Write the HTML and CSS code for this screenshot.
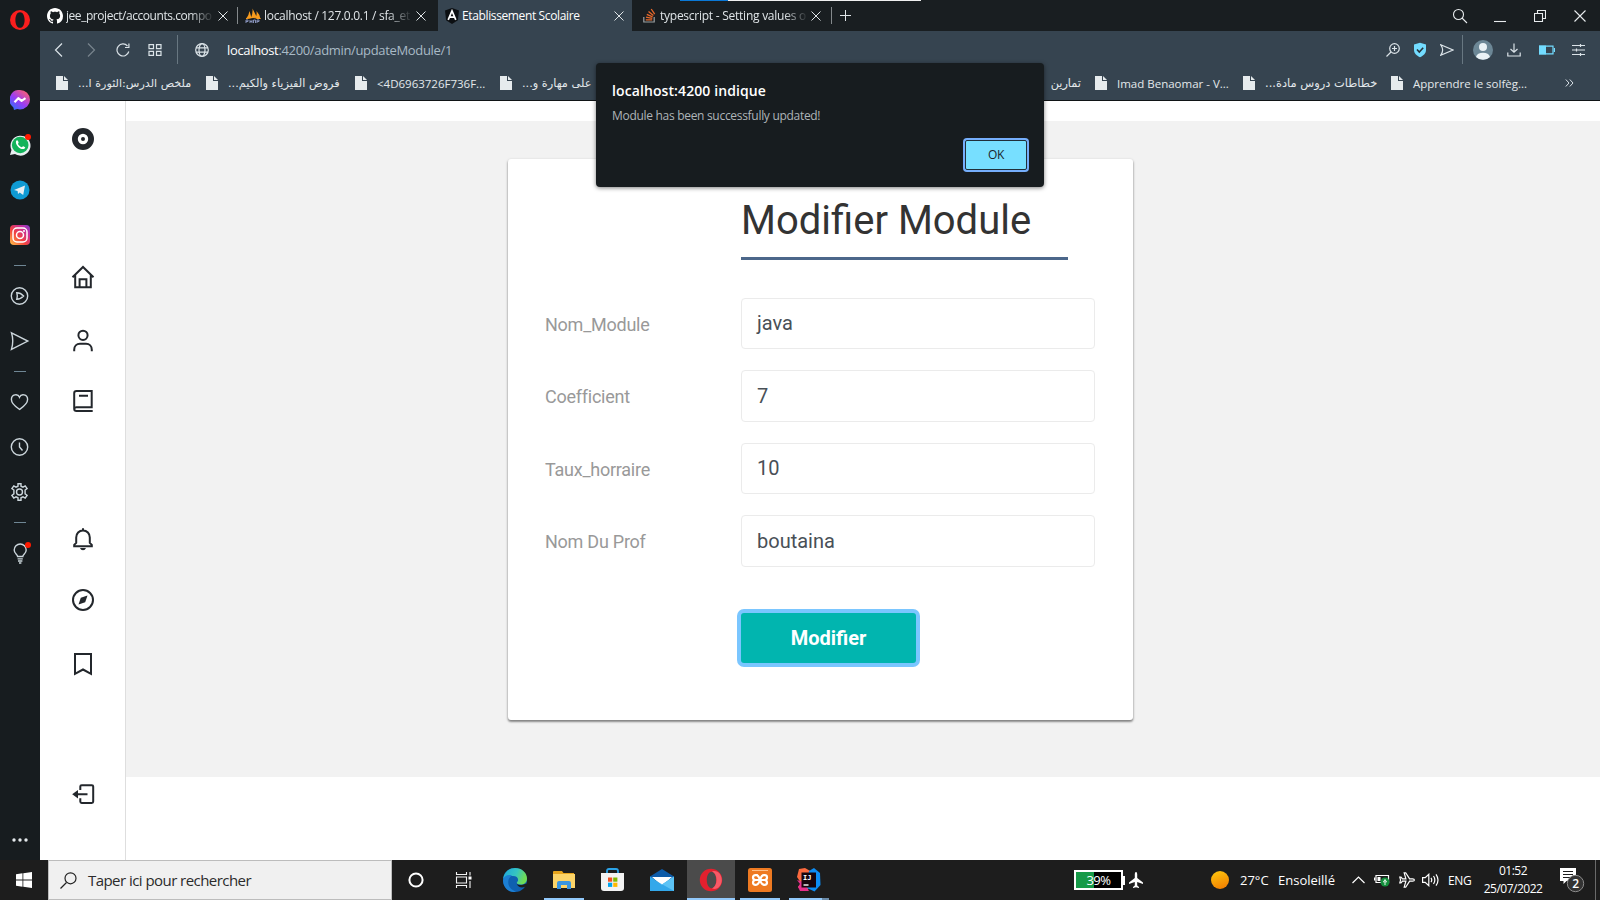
FILE: index.html
```html
<!DOCTYPE html>
<html lang="fr">
<head>
<meta charset="utf-8">
<title>Etablissement Scolaire</title>
<link rel="stylesheet" href="styles.css">
</head>
<body>
<div class="screen">
  <div class="browser">
    <aside class="opera-bar">
      <div class="slot logo"><svg width="20" height="20" viewBox="0 0 20 20"><path fill="#fa1e1e" fill-rule="evenodd" d="M10 0a10 10 0 1 0 0 20a10 10 0 1 0 0-20zM10 2.2c3 0 4.6 3.5 4.6 7.8s-1.6 7.8-4.6 7.8S5.400 14.300 5.400 10 7 2.200 10 2.200z"/></svg></div>
      <div class="slot"><svg width="20" height="20" viewBox="0 0 20 20"><defs><linearGradient id="ms" x1="0" y1="1" x2=".8" y2="0"><stop offset="0" stop-color="#1a7cff"/><stop offset=".5" stop-color="#9a3cf5"/><stop offset="1" stop-color="#ff6070"/></linearGradient></defs><path fill="url(#ms)" d="M10 0a10 9.700 0 0 1 0 19.400q-1.500 0-2.800-.4L4 20l-.6-2.600A9.700 9.700 0 0 1 10 0z"/><path d="M4.500 12.200l3.800-4 3.300 2.600 3.900-2.600" fill="none" stroke="#fff" stroke-width="2.200" stroke-linejoin="round"/></svg></div>
      <div class="slot"><svg width="22" height="22" viewBox="0 0 22 22"><path fill="#e8eef0" d="M1 21l1.500-5A10 10 0 1 1 6 20z"/><circle cx="11.200" cy="11" r="8.300" fill="#12b35a"/><path d="M7 7.200c1-1.700 2-.6 2.600 1.300.2.700-.9 1-.5 1.700 1 1.600 2 2.400 3.500 3 .7.200 1-1.200 1.700-.9 2.500 1 2.200 1.500 1.300 2.300-3 2.200-9.600-3-8.600-7.400z" fill="#fff"/><circle cx="19" cy="3" r="3" fill="#ff1a00"/></svg></div>
      <div class="slot"><svg width="20" height="20" viewBox="0 0 20 20"><circle cx="10" cy="10" r="9.500" fill="#0f9ad3"/><path d="M4 10l11-4.600-1.800 9.600-3.500-2.500-1.700 1.600-.4-3z" fill="#e6eef2"/></svg></div>
      <div class="slot"><svg width="20" height="20" viewBox="0 0 20 20"><defs><linearGradient id="ig" x1="0" y1="1" x2="1" y2="0"><stop offset="0" stop-color="#ffc54a"/><stop offset=".4" stop-color="#f4443c"/><stop offset=".75" stop-color="#c72f9c"/><stop offset="1" stop-color="#7a3fd0"/></linearGradient></defs><rect width="20" height="20" rx="4" fill="url(#ig)"/><g fill="none" stroke="#fff" stroke-width="1.500"><rect x="3" y="3" width="14" height="14" rx="4"/><circle cx="10" cy="10" r="3.500"/></g><circle cx="14" cy="6" r="1" fill="#fff"/></svg></div>
      <div class="dash"></div>
      <div class="slot"><svg class="line" width="20" height="20" viewBox="0 0 20 20"><circle cx="9.500" cy="10" r="8.200"/><path d="M6.800 6.800q3.800 0 6.800 3.200-3 3.200-6.800 3.200 1-3.200 0-6.400z"/></svg></div>
      <div class="slot"><svg class="line" width="20" height="20" viewBox="0 0 20 20"><path d="M1.500 1.800L17.800 10 1.500 18.300q2.500-8.300 0-16.500z"/></svg></div>
      <div class="dash"></div>
      <div class="slot"><svg class="line" width="20" height="20" viewBox="0 0 20 20"><path d="M9.500 5.200C8 1.500 1.400 2 1.400 7.500c0 4.500 5 7.800 8.100 9.900 3-2.100 8.100-5.400 8.100-9.900C17.600 2 11 1.500 9.500 5.200z"/></svg></div>
      <div class="slot"><svg class="line" width="20" height="20" viewBox="0 0 20 20"><circle cx="9.500" cy="10" r="8.200"/><path d="M9.500 5.500V10l3 3.500"/></svg></div>
      <div class="slot"><svg class="line" width="20" height="20" viewBox="0 0 20 20"><path d="M8 1.800h3v2.400l2 1 2.200-1.300 1.900 2.700-2 1.400v3.900l2 1.400-1.900 2.700-2.200-1.200-2 1v2.400H8v-2.400l-2-1L3.800 16 1.900 13.300l2-1.400V8l-2-1.400 1.900-2.700L6 5.200l2-1z"/><circle cx="9.500" cy="10" r="3"/></svg></div>
      <div class="dash"></div>
      <div class="slot"><svg width="24" height="24" viewBox="0 0 24 24"><g fill="none" stroke="#ccd6dc" stroke-width="1.400"><path d="M9.600 15.500c0-2-3.400-2.800-3.400-6.500a6 6 0 0 1 12 0c0 3.700-3.400 4.500-3.400 6.500zM9.600 17.900h5.200M10 20h4.400M11 22h2.400"/></g><circle cx="20" cy="4" r="3" fill="#ff1a00"/></svg></div>
      <div class="slot last"><svg width="16" height="4" viewBox="0 0 16 4" fill="#e4e9ec"><circle cx="2" cy="2" r="1.700"/><circle cx="8" cy="2" r="1.700"/><circle cx="14" cy="2" r="1.700"/></svg></div>
    </aside>
    <div class="window">
      <div class="tabs">
        <div class="tab t1"><svg width="16" height="16" viewBox="0 0 16 16"><path fill="#fff" d="M8 0C3.580 0 0 3.580 0 8c0 3.540 2.290 6.530 5.470 7.590.4.070.55-.17.55-.38 0-.19-.01-.82-.01-1.490-2.010.37-2.530-.49-2.690-.94-.09-.23-.48-.94-.82-1.130-.28-.15-.68-.52-.01-.53.63-.01 1.080.58 1.230.82.72 1.210 1.870.87 2.330.66.07-.52.28-.87.51-1.070-1.780-.2-3.640-.89-3.640-3.950 0-.87.31-1.590.82-2.150-.08-.2-.36-1.020.08-2.120 0 0 .67-.21 2.200.82.64-.18 1.320-.27 2-.27s1.360.09 2 .27c1.530-1.040 2.200-.82 2.200-.82.44 1.100.16 1.920.08 2.120.51.56.82 1.270.82 2.150 0 3.070-1.870 3.750-3.650 3.950.29.25.54.73.54 1.480 0 1.070-.01 1.930-.01 2.200 0 .21.15.46.55.38A8.010 8.010 0 0 0 16 8c0-4.420-3.580-8-8-8z"/></svg><span class="tab-text fade">jee_project/accounts.compo</span><svg class="x" width="10" height="10" viewBox="0 0 10 10"><path d="M.5.500l9 9M9.500.500l-9 9"/></svg></div>
        <div class="sep"></div>
        <div class="tab t2"><svg width="16" height="16" viewBox="0 0 16 16"><path fill="#f89c1e" d="M1 11Q4 7 4.500 3l2 7zM6 10Q8 5 7.500.500L12 9.500zM11 9q1-3 .5-6 3 3 4 8h-4z"/><path d="M1 10.500q7-2 14.500 0" stroke="#f89c1e" fill="none"/><path d="M1 15v-3h2v1.500H1M5 15v-3m0 1.500h2M7 12v3m1.500 0v-3h2v3m1.500 0v-3h2v1.500h-2" stroke="#8590b8" fill="none"/></svg><span class="tab-text fade">localhost / 127.0.0.1 / sfa_et</span><svg class="x" width="10" height="10" viewBox="0 0 10 10"><path d="M.5.500l9 9M9.500.500l-9 9"/></svg></div>
        <div class="tab t3 active"><svg width="14" height="16" viewBox="0 0 14 16"><path fill="#0c0f12" d="M7 0l7 2.600-1.100 9.600L7 16l-5.900-3.800L0 2.600z"/><path d="M3.200 11.800L7 3l3.800 8.800M4.500 9.200h5" fill="none" stroke="#fff" stroke-width="1.700"/></svg><span class="tab-text">Etablissement Scolaire</span><svg class="x" width="10" height="10" viewBox="0 0 10 10"><path d="M.5.500l9 9M9.500.500l-9 9"/></svg></div>
        <div class="tab t4"><svg width="13" height="15" viewBox="0 0 13 15"><path d="M.8 9v5h10.400V9" fill="none" stroke="#9a9fa2" stroke-width="1.200"/><path d="M2.800 11.900h6.400M3 9.200l6.300 1.200M3.800 6.300l5.800 2.600M5.500 3.500l4.900 4M8.200 1l3.500 5.200" stroke="#e8682a" stroke-width="1.300" fill="none"/></svg><span class="tab-text fade">typescript - Setting values o</span><svg class="x" width="10" height="10" viewBox="0 0 10 10"><path d="M.5.500l9 9M9.500.500l-9 9"/></svg></div>
        <div class="sep"></div>
        <svg class="plus" width="11" height="11" viewBox="0 0 11 11"><path d="M5.500 0v11M0 5.500h11"/></svg>
        <div class="win-tools">
          <svg width="16" height="16" viewBox="0 0 16 16"><circle cx="6.500" cy="6.500" r="5"/><path d="M10 10l5 5"/></svg>
          <svg width="12" height="16" viewBox="0 0 12 16"><path d="M0 13.500h12"/></svg>
          <svg width="12" height="12" viewBox="0 0 12 12"><path d="M.5 3.500h8v8h-8zM3.500 3.500v-3h8v8h-3"/></svg>
          <svg width="12" height="12" viewBox="0 0 12 12"><path d="M.5.500l11 11M11.500.500l-11 11"/></svg>
        </div>
        <div class="strip"><i></i></div>
      </div>
      <div class="toolbar">
        <div class="nav">
          <svg width="14" height="14" viewBox="0 0 14 14"><path d="M10 .5L3.500 7l6.500 6.500"/></svg>
          <svg class="dim" width="14" height="14" viewBox="0 0 14 14"><path d="M4 .5L10.500 7 4 13.500"/></svg>
          <svg width="14" height="14" viewBox="0 0 14 14"><path d="M12.800 8.500A6 6 0 1 1 11.500 3M12.900.500v4H9"/></svg>
          <svg width="14" height="12" viewBox="0 0 14 12"><path d="M1 .6h4.500v4H1zM8.500.600H13v4H8.500zM1 7.400h4.500v4H1zM8.500 7.400H13v4H8.500z"/></svg>
        </div>
        <div class="vsep"></div>
        <svg class="globe" width="14" height="14" viewBox="0 0 14 14"><circle cx="7" cy="7" r="6.300"/><ellipse cx="7" cy="7" rx="3" ry="6.300"/><path d="M1 4.800h12M1 9.200h12"/></svg>
        <div class="url"><b>localhost</b>:4200/admin/updateModule/1</div>
        <div class="tb-right">
          <svg width="14" height="14" viewBox="0 0 14 14"><circle cx="8.500" cy="5.500" r="4.800"/><path d="M5 9l-4.500 4.500M8.500 3v5M6 5.500h5"/></svg>
          <svg class="shield" width="14" height="16" viewBox="0 0 14 16"><path fill="#73dcff" stroke="none" d="M7 .8l6 1.700v5.500c0 3.500-3 6-6 7.200C4 14 1 11.500 1 8V2.500z"/><path stroke="#26323a" stroke-width="1.600" d="M4 7.500L6.300 10l3.900-4.200"/></svg>
          <svg width="14" height="12" viewBox="0 0 14 12"><path d="M.8.800L13 6 .8 11.200Q4.500 6 .8.800z"/></svg>
          <div class="vsep"></div>
          <svg class="avatar" width="20" height="20" viewBox="0 0 20 20"><circle cx="10" cy="10" r="10" fill="#6c8796"/><circle cx="10" cy="7" r="4" fill="#eaf2f6"/><path fill="#eaf2f6" d="M3 17a7.200 5.500 0 0 1 14 0 10 10 0 0 1-14 0z"/></svg>
          <svg class="dl" width="14" height="14" viewBox="0 0 14 14"><path d="M7 .500v8.500M3.500 6L7 9.300 10.500 6M.8 9.500v3.500h12.400V9.500"/></svg>
          <svg class="saver" width="16" height="10" viewBox="0 0 16 10"><path fill="#73dcff" stroke="none" d="M0 .6h7v8.800H0z"/><path stroke="#73dcff" d="M.5 1.200h13.500v7.600H.5zM15.500 3v4"/></svg>
          <svg class="menu" width="13" height="12" viewBox="0 0 13 12"><path d="M0 1.500h13M0 6h13M0 10.500h13M8.500 0v3M4.500 4.500v3M8.500 9v3"/></svg>
        </div>
      </div>
      <div class="bookmarks">
        <div class="bm b1"><svg width="12" height="14" viewBox="0 0 12 14"><path d="M0 0h7v5h5v9H0zM8 0l4 4H8z"/></svg><span class="ar">ملخص الدرس:الثورة ا...</span></div>
        <div class="bm b2"><svg width="12" height="14" viewBox="0 0 12 14"><path d="M0 0h7v5h5v9H0zM8 0l4 4H8z"/></svg><span class="ar">فروض الفيزياء والكيم...</span></div>
        <div class="bm b3"><svg width="12" height="14" viewBox="0 0 12 14"><path d="M0 0h7v5h5v9H0zM8 0l4 4H8z"/></svg><span>&lt;4D6963726F736F...</span></div>
        <div class="bm b4"><svg width="12" height="14" viewBox="0 0 12 14"><path d="M0 0h7v5h5v9H0zM8 0l4 4H8z"/></svg><span class="ar">على مهارة و...</span></div>
        <div class="bm b5"><span class="ar">تمارين</span></div>
        <div class="bm b6"><svg width="12" height="14" viewBox="0 0 12 14"><path d="M0 0h7v5h5v9H0zM8 0l4 4H8z"/></svg><span>Imad Benaomar - V...</span></div>
        <div class="bm b7"><svg width="12" height="14" viewBox="0 0 12 14"><path d="M0 0h7v5h5v9H0zM8 0l4 4H8z"/></svg><span class="ar">خطاطات دروس مادة...</span></div>
        <div class="bm b8"><svg width="12" height="14" viewBox="0 0 12 14"><path d="M0 0h7v5h5v9H0zM8 0l4 4H8z"/></svg><span>Apprendre le solfèg...</span></div>
        <svg class="more" width="9" height="8" viewBox="0 0 9 8"><path d="M.8.500L4 4 .8 7.500M4.800.500L8 4 4.800 7.500"/></svg>
      </div>
      <div class="page">
        <nav class="side">
          <svg class="i1" width="24" height="24" viewBox="0 0 24 24"><path fill="#23272c" stroke="none" fill-rule="evenodd" d="M12 1a11 11 0 1 0 0 22 11 11 0 0 0 0-22zm0 5.800a5.200 5.200 0 1 1 0 10.400 5.200 5.200 0 0 1 0-10.400zm0 3.200a2 2 0 1 0 0 4 2 2 0 0 0 0-4z"/></svg>
          <svg class="i2" width="24" height="24" viewBox="0 0 24 24"><path d="M1.500 12.200L12 2l10.500 10.200M4.200 10v12.200h15.600V10M8.600 22v-7.800h6.800V22"/></svg>
          <svg class="i3" width="24" height="24" viewBox="0 0 24 24"><circle cx="12" cy="6.300" r="4.600"/><path d="M3.200 22.300v-1.600c0-3.500 2.400-6 5.800-6h6c3.400 0 5.800 2.500 5.800 6v1.600"/></svg>
          <svg class="i4" width="24" height="24" viewBox="0 0 24 24"><path d="M21.700 22H5.500a2.300 2.300 0 0 1-2.300-2.300V4.200A2.300 2.300 0 0 1 5.500 1.900h15.200v16.300H5.500A2.200 2.200 0 0 0 3.200 20M8 6.800h9"/></svg>
          <svg class="i5" width="24" height="24" viewBox="0 0 24 24"><path d="M3.200 19.200v-1.300l2-2V10.500c0-4 2.800-7 6.800-7s6.800 3 6.800 7v5.400l2 2v1.300zM12 1.200v2"/><path fill="#23272c" stroke="none" d="M9 21h6q-.8 2.300-3 2.300T9 21z"/></svg>
          <svg class="i6" width="24" height="24" viewBox="0 0 24 24"><circle cx="12" cy="12" r="10"/><path fill="#23272c" stroke="none" d="M16.500 7.500l-2.300 6.700-6.700 2.300 2.300-6.700z"/></svg>
          <svg class="i7" width="24" height="24" viewBox="0 0 24 24"><path d="M4 2h16v19.800l-8-4.300-8 4.300z"/></svg>
          <svg class="i8" width="24" height="24" viewBox="0 0 24 24"><path d="M9.300 8V4.600Q9.300 3.200 10.700 3.200H20.800Q22.200 3.200 22.200 4.600V19.600Q22.200 21 20.800 21H10.700Q9.300 21 9.300 19.600V16.200M4 12.200h12.500"/><path fill="#23272c" stroke="none" d="M1.200 12.200L7 8v8.400z"/></svg>
        </nav>
        <main class="main">
          <form class="card">
            <h1>Modifier Module</h1>
            <div class="row"><label>Nom_Module</label><div class="field up">java</div></div>
            <div class="row tall"><label>Coefficient</label><div class="field">7</div></div>
            <div class="row"><label>Taux_horraire</label><div class="field up">10</div></div>
            <div class="row tall"><label>Nom Du Prof</label><div class="field">boutaina</div></div>
            <div class="btn">Modifier</div>
          </form>
        </main>
      </div>
    </div>
    <div class="dialog">
      <div class="d-title">localhost:4200 indique</div>
      <div class="d-msg">Module has been successfully updated!</div>
      <div class="d-ok">OK</div>
    </div>
  </div>
  <footer class="taskbar">
    <div class="start"><svg width="16" height="16" viewBox="0 0 16 16" fill="#fff"><path d="M0 2.200l6.500-.9v6.300H0zM7.300 1.200L16 0v7.600H7.300zM0 8.400h6.500v6.300L0 13.800zM7.300 8.400H16V16l-8.700-1.200z"/></svg></div>
    <div class="search"><svg width="17" height="17" viewBox="0 0 17 17"><circle cx="10.500" cy="6.300" r="5.500"/><path d="M6.500 10.500L.5 16.500"/></svg><span>Taper ici pour rechercher</span></div>
    <div class="app w48"><svg width="16" height="16" viewBox="0 0 16 16"><circle cx="8" cy="8" r="6.600" fill="none" stroke="#fff" stroke-width="2"/></svg></div>
    <div class="app w48"><svg width="18" height="16" viewBox="0 0 18 16" fill="none" stroke="#f4f4f4" stroke-width="1.100"><path d="M1.500 0v2.500h10V0M1.500 5h10v6h-10zM1.500 16v-2.500h10V16M15 0v3.500M15 9v7"/><path fill="#fff" stroke="none" d="M13.500 4.500h3v3h-3z"/></svg></div>
    <div class="app edge"><svg width="24" height="24" viewBox="0 0 24 24"><defs><linearGradient id="eg" x1="0" y1="0" x2="1" y2=".3"><stop offset="0" stop-color="#1ba6e0"/><stop offset=".6" stop-color="#36c6c0"/><stop offset="1" stop-color="#6fdc55"/></linearGradient></defs><circle cx="12" cy="12" r="12" fill="#0f60b0"/><path fill="url(#eg)" d="M0 11C1 4 6 0 12 0c7 0 12 5 12 10.500 0 4-3 6-6 6-3.500 0-5-1.200-3.800-2.500 2-2.500.500-6-4.200-6-5 0-9 1-10 3z"/><path fill="#1c7fd3" d="M0 12c1-4 5-6 9-4.500-4 2-5 8-2 12 1.500 2 4 3.500 6 4.400C5 25 0 19 0 12z"/><path fill="#1d1d1d" d="M13.500 15.500c1.500 2 5 2 9.200.200l1.300 0v2l-2 1c-3 1.500-7 .8-8.500-3.200z"/></svg></div>
    <div class="app w40 run"><svg width="22" height="20" viewBox="0 0 22 20"><path fill="#e8a51c" d="M0 2q0-1 1-1h8l1.500 2H21v5H0z"/><path fill="#fcd468" d="M0 4h22v14H0z"/><path fill="#3995e0" d="M4 19v-6q0-2 2-2h10q2 0 2 2v6h-4v-4H8v4z"/></svg></div>
    <div class="app w48 store"><svg width="24" height="24" viewBox="0 0 24 24"><path d="M6 6V3q0-2 2-2h7q2 0 2 2v3" fill="none" stroke="#2ba3e8" stroke-width="1.800"/><path fill="#f3f3f3" d="M0 5h23v15q0 3-3 3H3q-3 0-3-3z"/><path fill="#f25022" d="M7 9.500h4.200v4.200H7z"/><path fill="#7fba00" d="M12.200 9.500h4.200v4.200h-4.200z"/><path fill="#00a4ef" d="M7 14.700h4.200v4.200H7z"/><path fill="#ffb900" d="M12.200 14.700h4.200v4.200h-4.200z"/></svg></div>
    <div class="app mail"><svg width="24" height="24" viewBox="0 0 24 24"><path fill="#0d5ba8" d="M0 8.500L12 1l12 7.500V12H0z"/><path fill="#fff" d="M2 9h20L12 18z"/><path fill="#33a8ea" d="M0 8.500l12 8 12-8V23H0z"/><path fill="#5cc3f5" d="M24 8.500V23L9 14.500l3 2z"/></svg></div>
    <div class="app w48 run on"><svg width="24" height="24" viewBox="0 0 24 24"><path fill="#e3202e" fill-rule="evenodd" d="M12 .8a11.200 11.200 0 1 0 0 22.400 11.200 11.200 0 1 0 0-22.400zM12.500 3.800c2.800 0 4.700 3.700 4.700 8.200s-1.900 8.200-4.700 8.200S7.800 16.500 7.800 12s1.900-8.200 4.700-8.200z"/><path fill="#ff7480" opacity=".7" d="M13 3.600c5-2 9.800 2.400 9.800 8.400s-4.800 10.400-9.800 8.400c6-2 6-14.800 0-16.800z"/></svg></div>
    <div class="app w40 run x1"><svg width="24" height="24" viewBox="0 0 24 24"><rect width="24" height="24" rx="2.500" fill="#ee7a22"/><path d="M4 2.500h16" stroke="#ffc08a"/><path d="M9.800 7.200H7.500Q5 7.200 5 9.500t2.500 2.500h9q2.500 0 2.500-2.500t-2.500-2.300h-.8c-2 0-2.700 2-3.700 4.800s-2 4.800-4 4.800h-.5Q5 16.800 5 14.500t2.500-2.500M8.300 7.200c2 0 2.700 2 3.700 4.800s2 4.800 4 4.800h.5q2.500 0 2.500-2.300t-2.500-2.500" fill="none" stroke="#fff" stroke-width="2.200"/></svg></div>
    <div class="app w40 run x2"><svg width="24" height="24" viewBox="0 0 24 24"><path fill="#fc6a3e" d="M2 1l6-1 7 4-4 18H4l-3-3 3-4-4-6z"/><path fill="#e52f8c" d="M0 12l6 2 6 9H3l-2-4 2-3z"/><path fill="#0d8df5" d="M12 3l5-3 6 5 .5 12-6 6.500L10 20z"/><path fill="#16060e" d="M4.500 4.500h14.500v15H4.500z"/><path d="M6.500 17h5" stroke="#fff" stroke-width="1.400"/><text x="6" y="12.300" class="ij">IJ</text></svg></div>
    <div class="tray">
      <div class="battery"><span>39%</span></div>
      <div class="tip"></div>
      <svg class="plane" width="14" height="16" viewBox="0 0 14 16"><path fill="#fff" d="M7 0q1.200 0 1.200 2v4L14 10.500V12l-5.800-2v3.500L10 15v1l-3-.8L4 16v-1l1.800-1.500V10L0 12v-1.500L5.800 6V2Q5.800 0 7 0z"/></svg>
      <div class="sun"></div>
      <div class="temp">27°C</div>
      <div class="weather">Ensoleillé</div>
      <svg class="chev" width="13" height="8" viewBox="0 0 13 8"><path d="M.5 7L6.500 1l6 6"/></svg>
      <svg class="bat2" width="17" height="14" viewBox="0 0 17 14"><path d="M2 2.500h12.500v7H2zM.500 4.500v3"/><path fill="#fff" stroke="none" d="M3.500 4h3v4h-3z"/><circle cx="11" cy="9" r="4.500" fill="#14903c" stroke="none"/><path d="M11 12V9.500M9.500 9L11 6.500 12.500 9z" stroke-width=".9"/></svg>
      <svg class="plane2" width="16" height="16" viewBox="0 0 16 16"><path d="M15.400 8q0-1.100-1.800-1.100h-3L6.700.8H5.200l1.700 6.100H3.500L2 5.200H.8L1.600 8l-.8 2.800H2l1.500-1.700h3.400l-1.700 6.100h1.500l3.900-6.100h3q1.800 0 1.800-1.100z"/></svg>
      <svg class="vol" width="18" height="14" viewBox="0 0 18 14"><path d="M.6 4.700h2.600L6.800 1.300v11.400L3.200 9.300H.6zM9 4.800q1.500 2.200 0 4.400M11.500 3q2.700 4 0 8M14 1.300q4 5.700 0 11.400"/></svg>
      <div class="lang">ENG</div>
      <div class="clock"><span class="time">01:52</span><span>25/07/2022</span></div>
      <svg class="notif" width="25" height="25" viewBox="0 0 25 25"><path fill="#fff" d="M0 0h16v13H6.500L3.500 16v-3H0z"/><path d="M3 3.500h10M3 6.500h10M3 9.500h7" stroke="#1d1d1d" fill="none"/><circle cx="15.500" cy="15.500" r="8.200" fill="#333" stroke="#8b8b8b"/><text x="12.200" y="20" class="n2">2</text></svg>
      <div class="peek"></div>
    </div>
  </footer>
</div>
</body>
</html>
```
FILE: styles.css
```css
* { box-sizing: border-box; }
body { margin: 0; font-family: "Open Sans", "Noto Sans", "DejaVu Sans", sans-serif; }
svg { display: block; flex: none; }
.screen { width: 1600px; height: 900px; overflow: hidden; display: flex; flex-direction: column; background: #fff; }
.browser { position: relative; height: 860px; display: flex; }

/* Browser side panel */
.opera-bar { width: 40px; background: #171c1f; display: flex; flex-direction: column; align-items: center; }
.slot { height: 45px; display: flex; align-items: center; justify-content: center; flex: none; }
.slot.logo { height: 40px; margin-bottom: 37px; }
.slot.last { height: 40px; margin-top: auto; }
.dash { height: 16px; width: 12px; background: linear-gradient(#6f8694, #6f8694) center / 12px 1px no-repeat; }
.line { fill: none; stroke: #ccd6dc; stroke-width: 1.4; }

/* Tab strip */
.window { width: 1560px; display: flex; flex-direction: column; }
.tabs { position: relative; height: 31px; background: #191e21; display: flex; align-items: center; color: #dfe4e7; font-size: 12px; }
.tab { height: 31px; display: flex; align-items: center; }
.t1 { width: 197px; padding-left: 7px; }
.t2 { width: 200px; padding-left: 7px; }
.t3 { width: 194px; padding-left: 7px; background: #364450; color: #fff; }
.t4 { width: 199px; padding-left: 11px; }
.tab-text { width: 146px; margin: 0 5px 0 3px; white-space: nowrap; overflow: hidden; letter-spacing: -.37px; }
.t1 .tab-text { letter-spacing: -.45px; margin-right: 6px; }
.t2 .tab-text { margin-right: 6px; letter-spacing: -.3px; }
.t3 .tab-text { width: 145px; margin-right: 7px; }
.t4 .tab-text { margin-left: 4px; letter-spacing: -.25px; }
.fade { -webkit-mask-image: linear-gradient(90deg, #000 124px, rgba(0,0,0,.1) 146px); mask-image: linear-gradient(90deg, #000 124px, rgba(0,0,0,.1) 146px); }
.x, .plus { fill: none; stroke: #dfe4e7; stroke-width: 1; }
.sep { width: 1px; height: 17px; background: #84898c; }
.plus { margin-left: 8px; }
.win-tools { margin-left: auto; display: flex; align-items: center; gap: 28px; padding-right: 14px; }
.win-tools svg { fill: none; stroke: #e8ecee; stroke-width: 1.1; }
.win-tools svg:first-child { margin-right: -2px; }
.strip { position: absolute; left: 640px; top: 0; width: 241px; height: 1px; background: #f0f0f0; }
.strip i { display: block; width: 48px; height: 1px; background: #0a78d6; }

/* Address bar */
.toolbar { height: 37px; background: #364450; display: flex; align-items: center; }
.toolbar svg { fill: none; stroke: #dbe3e8; stroke-width: 1.2; }
.nav { display: flex; align-items: center; gap: 18px; padding-left: 12px; width: 137px; }
.toolbar .dim { opacity: .4; }
.vsep { width: 1px; height: 29px; background: #687781; }
.globe { margin-left: 17px; }
.url { margin-left: 18px; font-size: 13px; color: #a9bac6; white-space: nowrap; letter-spacing: -.34px; }
.url b { font-weight: 400; color: #fff; }
.tb-right { margin-left: auto; display: flex; align-items: center; padding-right: 15px; }
.tb-right svg { margin-left: 13px; }
.tb-right .vsep { margin-left: 8px; }
.tb-right .avatar { stroke: none; margin-left: 10px; }
.tb-right .dl { margin-left: 14px; }
.tb-right .saver { margin-left: 18px; }
.tb-right .menu { margin-left: 17px; }

/* Bookmarks bar */
.bookmarks { height: 33px; background: #364450; border-bottom: 1px solid #101416; display: flex; align-items: center; padding: 0 0 2px 16px; color: #e3e8eb; font-size: 11.500px; }
.bm { display: flex; align-items: center; gap: 10px; white-space: nowrap; }
.bm svg { fill: #e6ebed; }
.ar { direction: rtl; font-family: "DejaVu Sans", sans-serif; font-size: 11.300px; }
.b1 { width: 150px; } .b2 { width: 149px; } .b3 { width: 145px; }
.b4 { width: 504px; } .b5 { width: 91px; justify-content: flex-end; padding-right: 14px; }
.b1 .ar { font-size: 11.150px; }
.b6 { width: 148px; } .b7 { width: 148px; } .b8 { width: 174px; }
.b7 .ar { font-size: 11.450px; }
.more { fill: none; stroke: #dbe3e8; }

/* Web page */
.page { display: flex; height: 759px; background: #fff; }
.side { width: 86px; border-right: 1px solid #dedede; display: flex; flex-direction: column; align-items: center; }
.side svg { fill: none; stroke: #23272c; stroke-width: 2; }
.i1 { margin-top: 26px; } .i2 { margin-top: 114px; } .i3 { margin-top: 40px; } .i4 { margin-top: 36px; }
.i5 { margin-top: 114px; } .i6 { margin-top: 37px; } .i7 { margin-top: 40px; } .i8 { margin-top: 106px; }
.main { margin-top: 20px; width: 1474px; height: 656px; background: #f2f2f2; padding: 38px 0 0 382px; }
.card { width: 625px; height: 561px; background: #fff; border-radius: 3px; box-shadow: 0 2px 2px rgba(0,0,0,.32), 0 1px 3px rgba(0,0,0,.28); padding: 38px 37px 0; font-family: Roboto, sans-serif; }
.card h1 { margin: 0 0 38px 196px; width: 327px; height: 63px; border-bottom: 3px solid #4c678a; font-weight: 400; font-size: 40px; line-height: 47px; color: #333; white-space: nowrap; }
.row { display: flex; height: 51px; margin-bottom: 21px; align-items: center; }
.row.tall { height: 52px; }
.row label { width: 196px; font-size: 18px; letter-spacing: -.25px; color: #999; padding-top: 2px; }
.row.tall label { padding-top: 0; }
.field { width: 354px; height: 100%; border: 1px solid #ebebeb; border-radius: 4px; padding: 0 15px; font-size: 20px; line-height: 50px; color: #495057; }
.field.up { line-height: 48px; }
.btn { margin: 46px 0 0 196px; width: 175px; height: 50px; border-radius: 3px; background: #01b5af; box-shadow: 0 0 0 4px #7ac6ff; color: #fff; font-weight: 700; font-size: 20px; line-height: 50px; text-align: center; }

/* Alert dialog */
.dialog { position: absolute; left: 596px; top: 63px; width: 448px; height: 124px; background: #171c1f; border-radius: 4px; box-shadow: 0 1px 4px rgba(0,0,0,.5); padding: 18px 16px 0; display: flex; flex-direction: column; }
.d-title { font-size: 14px; line-height: 20px; font-weight: 600; color: #fff; letter-spacing: .1px; }
.d-msg { margin-top: 6px; font-size: 12px; line-height: 18px; color: #aeb4b8; letter-spacing: -.3px; }
.d-ok { align-self: flex-end; margin: 15px 1px 0 0; width: 62px; height: 30px; border-radius: 2px; border: 1px solid #20303a; background: #77dfff; box-shadow: 0 0 0 2px #75aefb; font-size: 12px; line-height: 28px; text-align: center; color: #1b262c; letter-spacing: -.3px; }

/* Taskbar */
.taskbar { height: 40px; background: #1d1d1d; display: flex; color: #fff; }
.start { width: 48px; display: flex; align-items: center; justify-content: center; }
.search { width: 344px; background: #f0f0f0; border: 1px solid #bcbcbc; display: flex; align-items: center; gap: 11px; padding-left: 11px; color: #2b2b2b; font-size: 15px; letter-spacing: -.55px; white-space: nowrap; }
.search svg { fill: none; stroke: #222; stroke-width: 1.200; }
.app { display: flex; align-items: center; justify-content: center; }
.w48 { width: 48px; } .w40 { width: 40px; }
.edge { width: 54px; margin-right: 2px; }
.store { margin-left: 5px; }
.mail { width: 50px; }
.run { border-bottom: 2px solid #92c9fb; }
.run svg { margin-top: 2px; }
.on { background: #4b4b4b; }
.x1 { margin-left: 5px; }
.x2 { margin-left: 9px; border-bottom-color: #92c9fb; background: linear-gradient(#5f7f9c, #5f7f9c) right bottom / 8px 2px no-repeat border-box; border-image: linear-gradient(90deg, #92c9fb 32px, #6b8ba8 32px) 2; }
.ij { font: 700 7px "DejaVu Sans Mono", monospace; fill: #fff; }
.tray { flex: 1; display: flex; align-items: center; font-size: 13px; white-space: nowrap; }
.tray > * { flex: none; }
.battery { margin-left: 245px; width: 49px; height: 20px; border: 2px solid #fff; background: linear-gradient(90deg, #179a48 39%, #000 39%); font-size: 13px; line-height: 16px; text-align: center; letter-spacing: -.5px; }
.tip { width: 2px; height: 9px; background: #fff; }
.plane { margin-left: 4px; }
.sun { width: 18px; height: 18px; border-radius: 50%; background: linear-gradient(160deg, #ffc90e, #f07800); margin-left: 68px; }
.temp { width: 38px; margin-left: 11px; }
.weather { width: 74px; }
.chev, .bat2, .plane2, .vol { fill: none; stroke: #fff; stroke-width: 1.200; }
.bat2 { margin-left: 9px; } .plane2 { margin-left: 8px; } .vol { margin-left: 7px; }
.lang { margin-left: 8px; width: 36px; font-size: 12px; letter-spacing: -.3px; }
.clock { width: 58px; display: flex; flex-direction: column; align-items: center; font-size: 12px; line-height: 18px; letter-spacing: -.5px; }
.notif { margin-left: 18px; }
.n2 { font: 600 12px "Open Sans", sans-serif; fill: #fff; }
.peek { width: 1px; height: 40px; background: #6a6a6a; margin-left: auto; margin-right: 4px; }
```
